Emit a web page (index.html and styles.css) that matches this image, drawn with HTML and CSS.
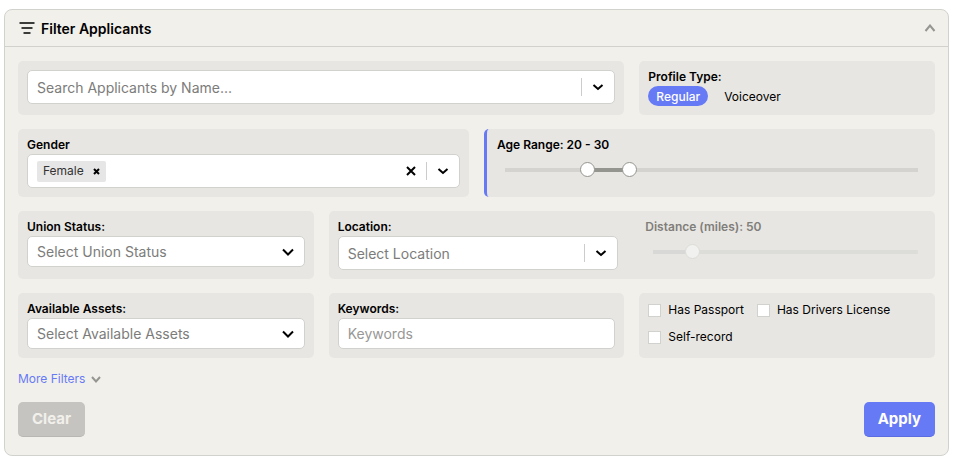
FILE: index.html
```html
<!DOCTYPE html>
<html lang="en">
<head>
    <meta charset="UTF-8">
    <meta name="viewport" content="width=device-width, initial-scale=1.0">
    <title>Filter Applicants</title>
    <link rel="stylesheet" href="styles.css">
</head>
<body>

<form class="panel">
    <button type="button" class="panel-header" aria-expanded="true">
        <svg class="filter-icon" width="16" height="12" viewBox="0 0 16 12"><path d="M0.5 1H15.5M2.5 6H13.5M4.5 11H11.5"/></svg>
        <span class="panel-title">Filter Applicants</span>
        <svg class="thin-chevron" width="12" height="8" viewBox="0 0 12 8"><path d="M1.5 7L6 1.5L10.5 7"/></svg>
    </button>

    <div class="panel-body">
        <div class="filters">

            <div class="card span-4">
                <div class="control tall">
                    <input type="text" class="field" placeholder="Search Applicants by Name..." aria-label="Search Applicants by Name">
                    <div class="indicators">
                        <span class="separator"></span>
                        <svg class="chevron" width="12" height="8" viewBox="0 0 12 8"><path d="M1.5 2L6 6L10.5 2"/></svg>
                    </div>
                </div>
            </div>

            <div class="card span-2">
                <div class="label">Profile Type:</div>
                <div class="pills">
                    <button type="button" class="pill active">Regular</button>
                    <button type="button" class="pill">Voiceover</button>
                </div>
            </div>

            <div class="card span-3">
                <label class="label" for="gender">Gender</label>
                <div class="control tall multi">
                    <span class="tag">Female
                        <button type="button" class="icon-button" aria-label="Remove Female">
                            <svg class="cross" width="7" height="7" viewBox="0 0 7 7"><path d="M1 1L6 6M6 1L1 6"/></svg>
                        </button>
                    </span>
                    <input type="text" id="gender" class="field">
                    <div class="indicators">
                        <button type="button" class="icon-button" aria-label="Clear gender">
                            <svg class="cross" width="10" height="10" viewBox="0 0 10 10"><path d="M1 1L9 9M9 1L1 9"/></svg>
                        </button>
                        <span class="separator"></span>
                        <svg class="chevron" width="12" height="8" viewBox="0 0 12 8"><path d="M1.5 2L6 6L10.5 2"/></svg>
                    </div>
                </div>
            </div>

            <div class="card span-3 changed">
                <label class="label" for="age-min">Age Range: 20 - 30</label>
                <div class="slider age">
                    <input type="range" id="age-min" min="0" max="100" value="20">
                    <input type="range" min="0" max="100" value="30" aria-label="Maximum age">
                </div>
            </div>

            <div class="card span-2">
                <label class="label" for="union">Union Status:</label>
                <div class="control">
                    <select id="union" class="field">
                        <option>Select Union Status</option>
                    </select>
                    <div class="indicators">
                        <svg class="chevron" width="12" height="8" viewBox="0 0 12 8"><path d="M1 1.5L6 6.5L11 1.5"/></svg>
                    </div>
                </div>
            </div>

            <div class="card span-4 split">
                <div>
                    <label class="label" for="location">Location:</label>
                    <div class="control tall">
                        <select id="location" class="field">
                            <option>Select Location</option>
                        </select>
                        <div class="indicators">
                            <span class="separator"></span>
                            <svg class="chevron" width="12" height="8" viewBox="0 0 12 8"><path d="M1.5 2L6 6L10.5 2"/></svg>
                        </div>
                    </div>
                </div>
                <div class="muted">
                    <label class="label" for="distance">Distance (miles): 50</label>
                    <div class="slider distance">
                        <input type="range" id="distance" min="5" max="310" value="50" disabled>
                    </div>
                </div>
            </div>

            <div class="card span-2">
                <label class="label" for="assets">Available Assets:</label>
                <div class="control">
                    <select id="assets" class="field">
                        <option>Select Available Assets</option>
                    </select>
                    <div class="indicators">
                        <svg class="chevron" width="12" height="8" viewBox="0 0 12 8"><path d="M1 1.5L6 6.5L11 1.5"/></svg>
                    </div>
                </div>
            </div>

            <div class="card span-2">
                <label class="label" for="keywords">Keywords:</label>
                <div class="control keywords">
                    <input type="text" id="keywords" class="field" placeholder="Keywords">
                </div>
            </div>

            <div class="card span-2 checks">
                <label class="check"><input type="checkbox">Has Passport</label>
                <label class="check"><input type="checkbox">Has Drivers License</label>
                <label class="check"><input type="checkbox">Self-record</label>
            </div>
        </div>

        <a href="#" class="more">More Filters
            <svg class="thin-chevron" width="10" height="7" viewBox="0 0 10 7"><path d="M1 1L5 5.5L9 1"/></svg>
        </a>

        <div class="actions">
            <button type="reset" class="btn btn-clear" disabled>Clear</button>
            <button type="submit" class="btn btn-apply">Apply</button>
        </div>
    </div>
</form>

</body>
</html>
```
FILE: styles.css
```css
* {
    box-sizing: border-box;
}

body {
    margin: 9px 8px 8px 4px;
    background-color: #fff;
    color: #000;
    font-family: Inter, "Liberation Sans", sans-serif;
    font-size: 12px;
    line-height: 16px;
}

button, input, select {
    margin: 0;
    font-family: inherit;
    color: inherit;
}

svg {
    display: block;
    fill: none;
}

.panel {
    background-color: #f2f0eb;
    border: 1px solid #d1d1cd;
    border-radius: 8px;
}

.panel-header {
    display: flex;
    align-items: center;
    width: 100%;
    height: 37px;
    padding: 0 12px 0 14px;
    background: none;
    border: none;
    border-bottom: 1px solid #d1d1cd;
    cursor: pointer;
}

.panel-title {
    flex: 1;
    margin-left: 6px;
    font-size: 14px;
    font-weight: 600;
    text-align: left;
}

.filter-icon {
    stroke: #000;
    stroke-width: 1.6;
}

.thin-chevron {
    stroke: #959591;
    stroke-width: 2;
}

.panel-body {
    padding: 14px 13px 18px;
}

.filters {
    display: grid;
    grid-template-columns: repeat(6, 1fr);
    gap: 14px 15px;
}

.card {
    padding: 9px;
    background-color: #e8e6e2;
    border-radius: 5px;
}

.span-2 { grid-column: span 2; }
.span-3 { grid-column: span 3; }
.span-4 { grid-column: span 4; }

.changed {
    border-left: 3px solid #667af6;
    padding-left: 10px;
}

.label {
    display: block;
    padding-bottom: 2px;
    font-weight: 600;
    line-height: 14px;
}

.control {
    display: grid;
    height: 31px;
    background-color: #fff;
    border: 1px solid #d1d1cd;
    border-radius: 5px;
}

.tall {
    height: 34px;
}

/* the field fills the whole control, the arrow lies over its right end */
.field, .indicators {
    grid-area: 1 / 1;
}

.field {
    width: 100%;
    min-width: 0;
    padding: 0 9px;
    background: none;
    border: none;
    outline: none;
    appearance: none;
    color: #7c7c7a;
    font-size: 14px;
}

.field::placeholder {
    color: #7c7c7a;
    opacity: 1;
}

.keywords .field::placeholder {
    color: #989896;
}

.indicators {
    display: flex;
    align-items: center;
    justify-self: end;
    gap: 10px;
    padding-right: 10px;
    pointer-events: none;
}

.separator {
    width: 1px;
    height: 18px;
    background-color: #ccc;
}

.chevron {
    stroke: #000;
    stroke-width: 2;
}

.cross {
    stroke: #000;
    stroke-width: 2;
}

.multi {
    display: flex;
    align-items: center;
    padding-left: 9px;
}

.multi .field {
    flex: 1;
}

.tag {
    display: flex;
    align-items: center;
    gap: 9px;
    height: 21px;
    padding: 0 6px;
    background-color: #e6e6e6;
    border-radius: 2px;
    color: #333;
}

.icon-button {
    padding: 0;
    background: none;
    border: none;
    cursor: pointer;
    pointer-events: auto;
}

.pills {
    display: flex;
    gap: 8px;
}

.pill {
    height: 20px;
    padding: 0 8px;
    background: none;
    border: none;
    border-radius: 10px;
    font-size: 12px;
    cursor: pointer;
}

.pill.active {
    background-color: #667af6;
    color: #fff;
    font-weight: 500;
}

.slider {
    display: grid;
    align-items: center;
    height: 15px;
    margin: 8px 8px 0;
}

.age {
    background: linear-gradient(to right, #d4d3cf 20%, #959590 20%, #959590 30%, #d4d3cf 30%) center / 100% 4px no-repeat;
}

.distance {
    background: linear-gradient(to right, #d8d8d6 15%, #dcdcd8 15%) center / 100% 4px no-repeat;
}

.slider input {
    grid-area: 1 / 1;
    height: 15px;
    margin: 0 -7px;
    background: none;
    appearance: none;
    pointer-events: none;
}

.slider input::-webkit-slider-thumb {
    width: 15px;
    height: 15px;
    background-color: #fff;
    border: 1px solid #959590;
    border-radius: 50%;
    appearance: none;
    pointer-events: auto;
}

.distance input::-webkit-slider-thumb {
    background-color: #f1f1ef;
    border-color: #dcdcd8;
}

.split {
    display: grid;
    grid-template-columns: 1fr 1fr;
    gap: 27px;
}

.muted {
    color: #7f7e7a;
}

.checks {
    display: flex;
    flex-wrap: wrap;
    align-content: flex-start;
    gap: 11px 13px;
}

.check {
    display: flex;
    align-items: center;
    gap: 7px;
}

.check input {
    width: 13px;
    height: 13px;
    background-color: #fff;
    border: 1px solid #d1d1cd;
    appearance: none;
}

.check input:checked {
    background-color: #667af6;
}

.more {
    display: inline-flex;
    align-items: center;
    gap: 6px;
    margin-top: 13px;
    color: #667af6;
    text-decoration: none;
}

.actions {
    display: flex;
    justify-content: space-between;
    margin-top: 15px;
}

.btn {
    height: 35px;
    padding: 0 14px 1px;
    border: none;
    border-bottom: 1px solid #5a6ce0;
    border-radius: 5px;
    color: #fff;
    font-size: 15px;
    font-weight: 700;
}

.btn-clear {
    background-color: #c5c4c0;
    border-color: #b8b7b3;
    color: #f2f0eb;
}

.btn-apply {
    background-color: #667af6;
    cursor: pointer;
}
```
